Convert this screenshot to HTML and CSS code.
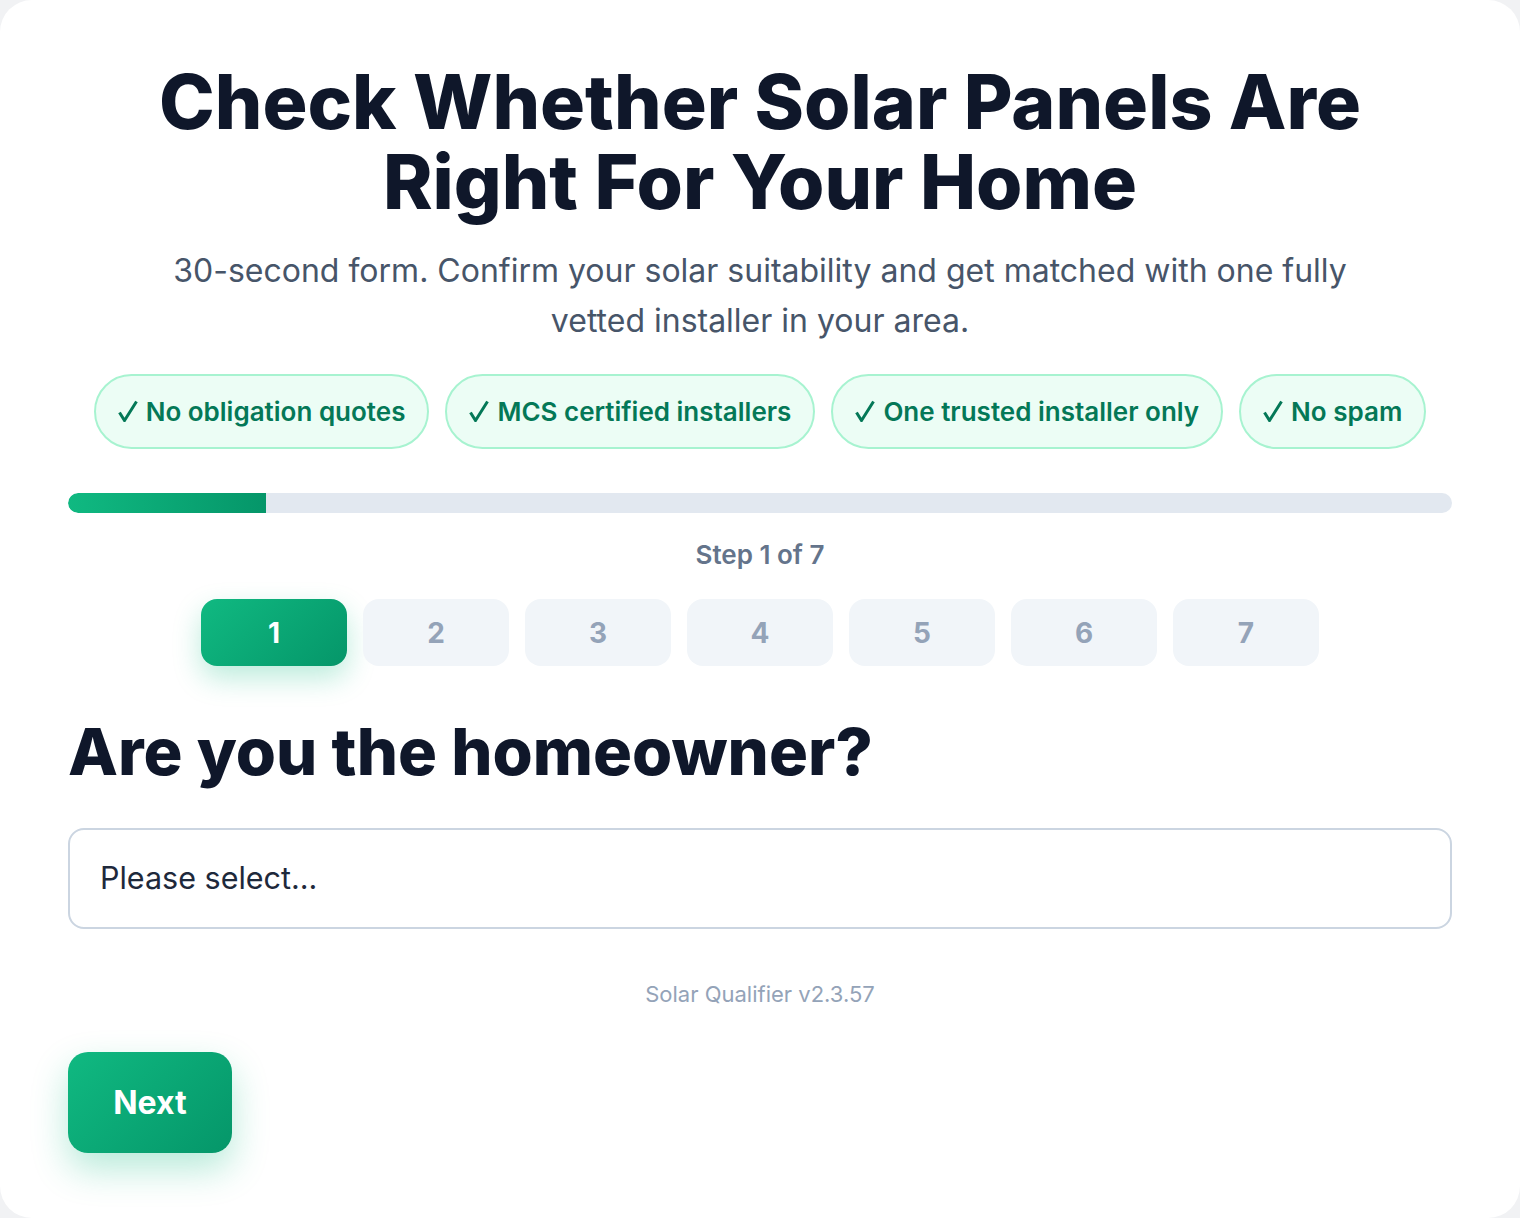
FILE: index.html
```html
<!DOCTYPE html>
<html lang="en">
<head>
<meta charset="utf-8">
<title>Solar Qualifier</title>
<link rel="stylesheet" href="styles.css">
</head>
<body>
<main class="card">
  <header class="hero">
    <h1 class="hero-title">Check Whether Solar Panels Are Right For Your Home</h1>
    <p class="hero-sub">30-second form. Confirm your solar suitability and get matched with one fully vetted installer in your area.</p>
    <ul class="badges">
      <li class="badge"><svg class="tick" viewBox="0 0 20 22" aria-hidden="true"><path d="M1.5 12.5 L6.5 20.5 L18.5 1.5"/></svg>No obligation quotes</li>
      <li class="badge"><svg class="tick" viewBox="0 0 20 22" aria-hidden="true"><path d="M1.5 12.5 L6.5 20.5 L18.5 1.5"/></svg>MCS certified installers</li>
      <li class="badge"><svg class="tick" viewBox="0 0 20 22" aria-hidden="true"><path d="M1.5 12.5 L6.5 20.5 L18.5 1.5"/></svg>One trusted installer only</li>
      <li class="badge"><svg class="tick" viewBox="0 0 20 22" aria-hidden="true"><path d="M1.5 12.5 L6.5 20.5 L18.5 1.5"/></svg>No spam</li>
    </ul>
  </header>

  <section class="progress">
    <div class="progress-track"><div class="progress-fill" style="width: 14.2857%"></div></div>
    <p class="progress-label">Step 1 of 7</p>
    <ol class="steps">
      <li class="step is-active">1</li>
      <li class="step">2</li>
      <li class="step">3</li>
      <li class="step">4</li>
      <li class="step">5</li>
      <li class="step">6</li>
      <li class="step">7</li>
    </ol>
  </section>

  <section class="question">
    <h2 class="question-title">Are you the homeowner?</h2>
    <div class="select">Please select...</div>
    <p class="version">Solar Qualifier v2.3.57</p>
    <button class="next-btn" type="button">Next</button>
  </section>
</main>
</body>
</html>
```

FILE: styles.css
```css
* { box-sizing: border-box; }

html, body {
  margin: 0;
  padding: 0;
  background: #f1f2f4;
  font-family: "Inter", "Noto Sans", sans-serif;
  color: #0f172a;
}

.card {
  width: 1520px;
  min-height: 1218px;
  background: #ffffff;
  border-radius: 32px;
  padding: 62px 68px 64px;
}

.hero {
  text-align: center;
}

.hero-title {
  margin: 0 auto;
  max-width: 1300px;
  font-size: 75px;
  line-height: 80px;
  font-weight: 800;
  letter-spacing: 0;
  color: #0f172a;
}

.hero-sub {
  margin: 24px auto 0;
  max-width: 1200px;
  font-size: 32px;
  line-height: 50px;
  color: #475569;
}

.badges {
  list-style: none;
  margin: 28px 0 0;
  padding: 0;
  display: flex;
  justify-content: center;
  gap: 16px;
}

.badge {
  height: 75px;
  padding: 0 22px;
  display: flex;
  align-items: center;
  gap: 8px;
  border: 2px solid #a7f3d0;
  border-radius: 999px;
  background: #ecfdf5;
  color: #047857;
  font-size: 26px;
  font-weight: 600;
}

.tick {
  width: 20px;
  height: 22px;
  margin-top: -2px;
  fill: none;
  stroke: currentColor;
  stroke-width: 3;
  stroke-linejoin: miter;
}

.progress {
  margin-top: 44px;
}

.progress-track {
  height: 20px;
  border-radius: 10px;
  background: #e2e8f0;
  overflow: hidden;
}

.progress-fill {
  height: 100%;
  background: linear-gradient(90deg, #10b981, #059669);
  border-radius: 10px 0 0 10px;
}

.progress-label {
  margin: 24px 0 0;
  text-align: center;
  font-size: 26px;
  line-height: 36px;
  font-weight: 600;
  color: #64748b;
}

.steps {
  list-style: none;
  margin: 26px 0 0;
  padding: 0;
  display: flex;
  justify-content: center;
  gap: 16px;
}

.step {
  width: 146px;
  height: 67px;
  border-radius: 16px;
  background: #f1f5f9;
  color: #94a3b8;
  font-size: 28px;
  font-weight: 700;
  display: flex;
  align-items: center;
  justify-content: center;
}

.step.is-active {
  background: linear-gradient(135deg, #10b981, #059669);
  color: #ffffff;
  box-shadow: 0 12px 28px rgba(16, 185, 129, 0.28);
}

.question {
  margin-top: 48px;
}

.question-title {
  margin: 0;
  font-size: 65px;
  line-height: 76px;
  font-weight: 800;
  color: #0f172a;
}

.select {
  margin-top: 38px;
  height: 101px;
  border: 2px solid #cbd5e1;
  border-radius: 16px;
  padding: 0 30px 3px;
  display: flex;
  align-items: center;
  font-size: 30.5px;
  color: #1e293b;
}

.version {
  margin: 50px 0 0;
  text-align: center;
  font-size: 22px;
  line-height: 30px;
  color: #94a3b8;
}

.next-btn {
  margin-top: 43px;
  width: 164px;
  height: 101px;
  border: none;
  border-radius: 20px;
  background: linear-gradient(135deg, #10b981, #059669);
  color: #ffffff;
  font-family: inherit;
  font-size: 32px;
  font-weight: 700;
  box-shadow: 0 16px 36px rgba(16, 185, 129, 0.3);
  cursor: pointer;
}
```
